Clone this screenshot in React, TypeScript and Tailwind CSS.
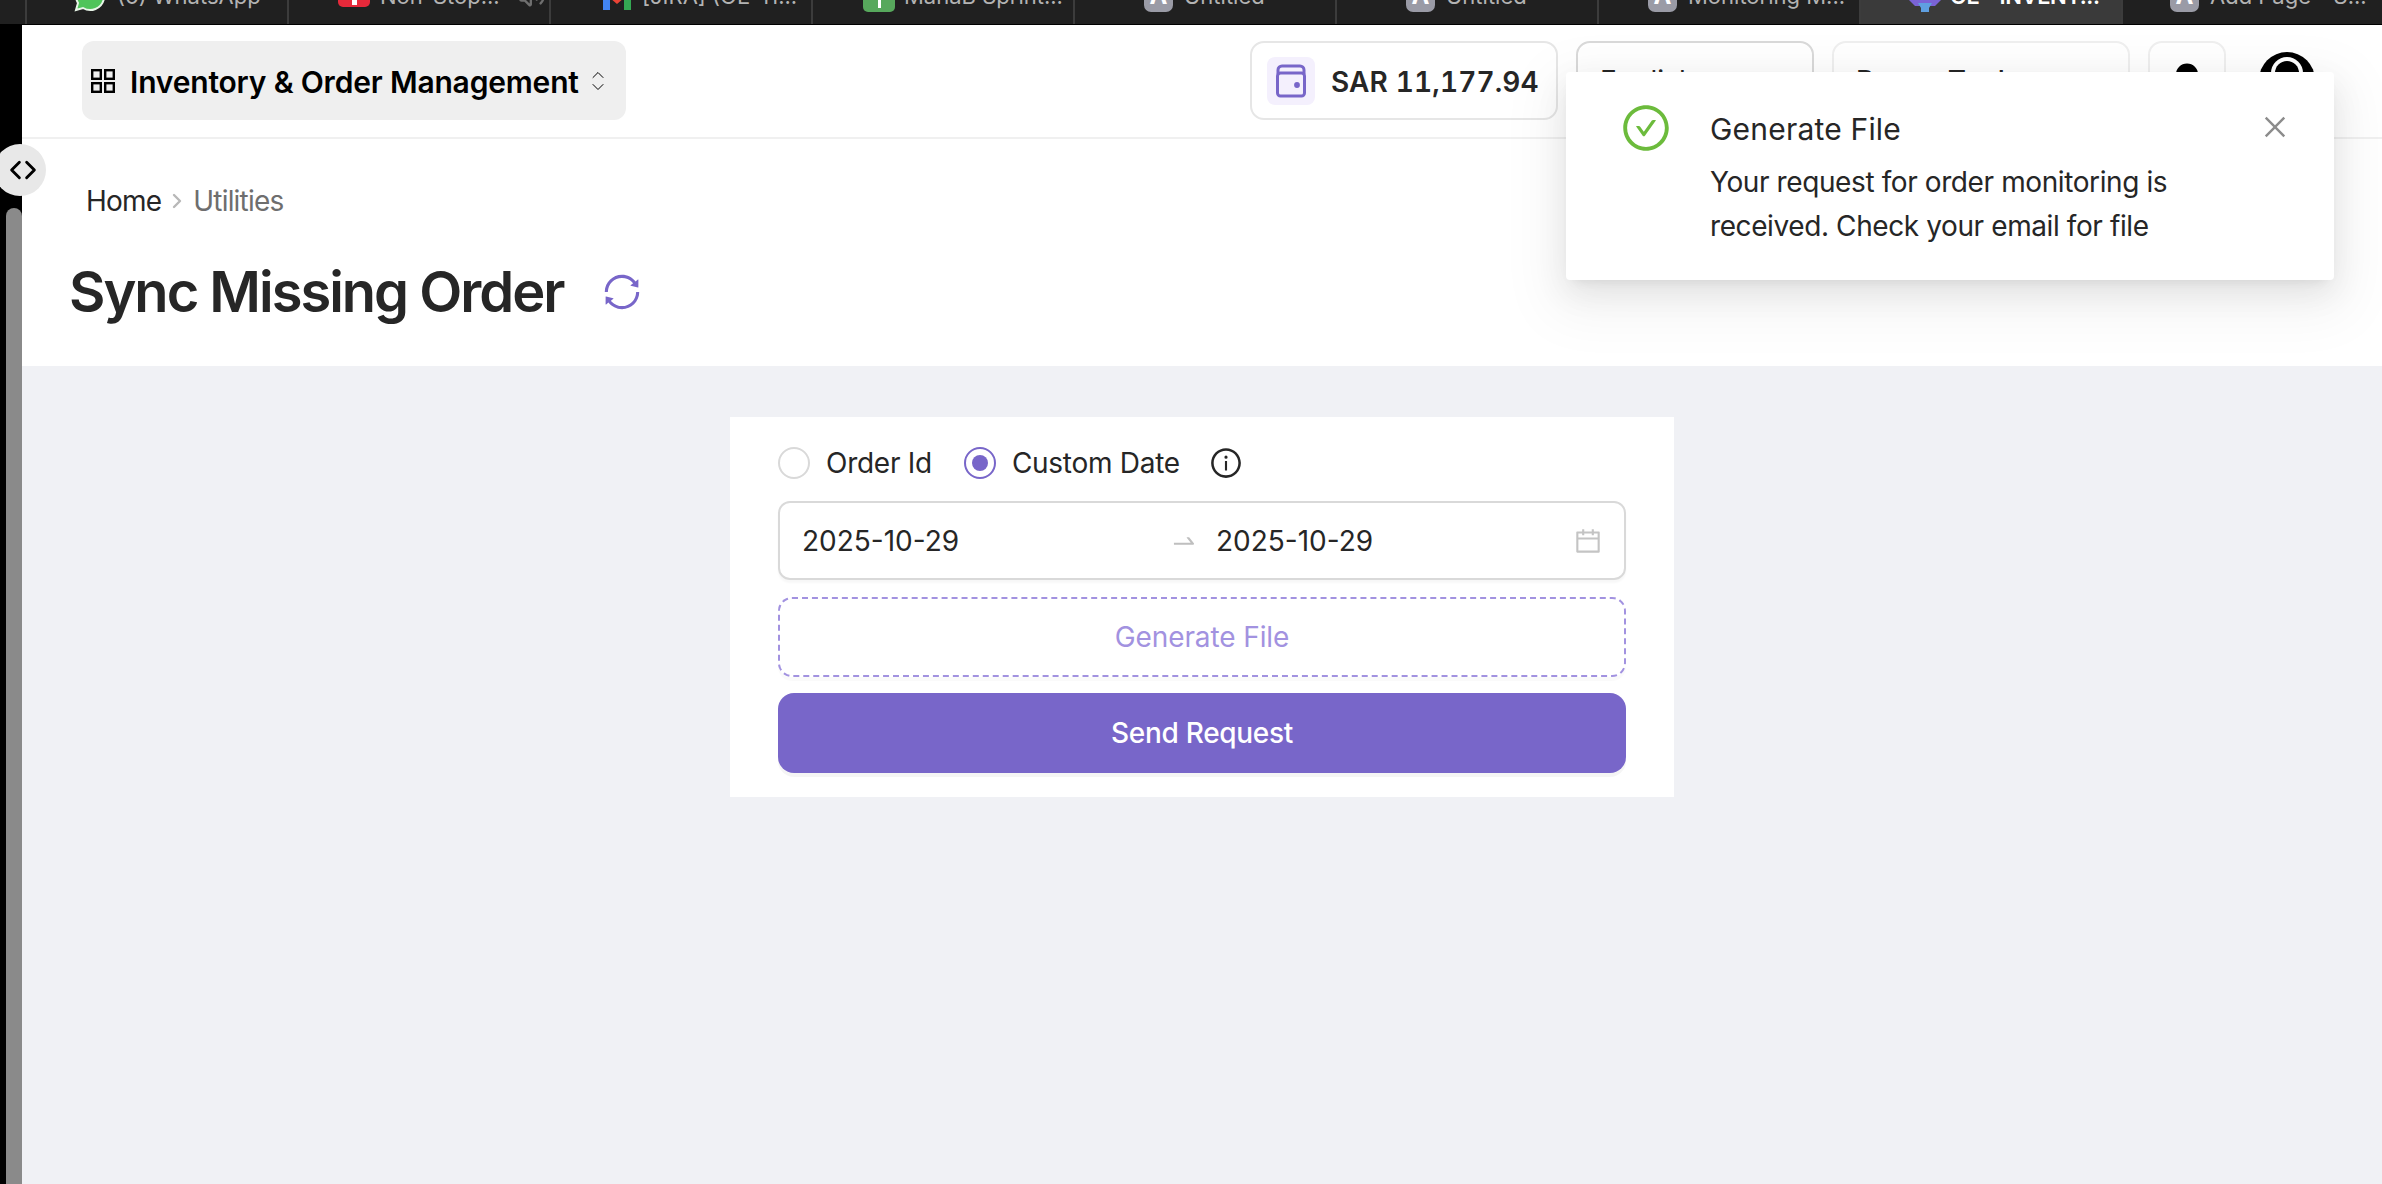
import { AiOutlineCalendar, AiOutlineCheckCircle, AiOutlineClose, AiOutlineInfoCircle, AiOutlineSwapRight, AiOutlineSync } from 'react-icons/ai';
import { Bell, ChevronDown, ChevronLeft, ChevronRight, ChevronUp, Volume2 } from 'lucide-react';

const LetterBadge = () => (
  <div className="flex h-[32px] w-[29px] shrink-0 items-center justify-center rounded-[7px] bg-[#9a9ba6] text-[24px] font-bold text-white">A</div>
);

const tabs = [
  {
    label: '(6) WhatsApp',
    cls: 'pl-[47px]',
    gap: 'gap-[11px]',
    icon: (
      <svg viewBox="0 0 32 32" className="h-[32px] w-[32px] shrink-0">
        <path d="M16 2a14 14 0 0 0-12 21L2 30l7-2a14 14 0 1 0 7-26z" fill="#4fc45a" stroke="#e8f5e8" strokeWidth="2" />
      </svg>
    ),
  },
  {
    label: 'Non-Stop...',
    cls: 'pl-[49px]',
    gap: 'gap-[10px]',
    muted: true,
    icon: <div className="flex h-[22px] w-[32px] shrink-0 items-end justify-center rounded-[5px] bg-[#e5293a] pb-[2px]"><div className="h-[7px] w-[5px] bg-white" /></div>,
  },
  {
    label: '[JIRA] (OE-11...',
    cls: 'pl-[52px]',
    gap: 'gap-[11px]',
    icon: (
      <svg viewBox="0 0 28 28" className="h-[28px] w-[28px] shrink-0">
        <rect x="0" y="0" width="7" height="28" fill="#4285f4" />
        <rect x="21" y="0" width="7" height="28" fill="#34a853" />
        <path d="M7 10l7 7 7-7v6l-7 6-7-6z" fill="#ea4335" />
      </svg>
    ),
  },
  {
    label: 'MahaB Sprint...',
    cls: 'pl-[50px]',
    gap: 'gap-[9px]',
    icon: <div className="flex h-[32px] w-[32px] shrink-0 justify-center rounded-[5px] bg-[#57a85c]"><div className="h-[28px] w-[3px] bg-white" /></div>,
  },
  { label: 'Untitled', cls: 'pl-[69px]', gap: 'gap-[11px]', icon: <LetterBadge /> },
  { label: 'Untitled', cls: 'pl-[69px]', gap: 'gap-[11px]', icon: <LetterBadge /> },
  { label: 'Monitoring M...', cls: 'pl-[49px]', gap: 'gap-[11px]', icon: <LetterBadge /> },
  {
    label: 'OE - INVENT...',
    cls: 'pl-[48px] tracking-[-0.4px]',
    gap: 'gap-[9px]',
    active: true,
    icon: (
      <svg viewBox="0 0 32 32" className="h-[32px] w-[32px] shrink-0">
        <path d="M0 20h32l-6 6h-20z" fill="#7a63d6" />
        <path d="M9 23h14l-3 5v4h-8v-4z" fill="#5f9fe0" />
      </svg>
    ),
  },
  { label: 'Add Page - S...', cls: 'pl-[47px]', gap: 'gap-[11px]', icon: <LetterBadge /> },
];

const BrowserTabs = () => (
  <div className="flex h-[24px] shrink-0 overflow-hidden bg-[#202020] pl-[25px] text-[22px] text-[#b3b3b3]">
    {tabs.map((tab, i) => (
      <div
        key={i}
        className={`flex h-[24px] w-[262px] shrink-0 items-center border-l-2 border-[#3c3c3c] ${tab.cls} ${tab.active ? 'bg-[#3a3a3a] font-semibold text-white' : ''}`}
      >
        <div className={`mb-[32px] flex h-[32px] items-center whitespace-nowrap ${tab.gap}`}>
          {tab.icon}
          <span>{tab.label}</span>
          {tab.muted && <Volume2 className="ml-[8px] h-[28px] w-[28px] text-[#6f6f6f]" />}
        </div>
      </div>
    ))}
  </div>
);

const HeaderBox = ({ className, children }: { className: string; children: React.ReactNode }) => (
  <div className={`flex h-[79px] items-center rounded-[14px] border-2 ${className}`}>{children}</div>
);

const Header = () => (
  <div className="flex h-[114px] shrink-0 items-start border-b-2 border-[#f0f0f0] bg-white pt-[16px] pl-[60px]">
    <div className="flex h-[79px] w-[544px] items-center rounded-[12px] bg-[#efefef] pl-[9px] text-black">
      <svg viewBox="0 0 24 24" className="h-[24px] w-[24px] shrink-0" fill="none" stroke="currentColor" strokeWidth="2.4">
        <rect x="1.2" y="1.2" width="8.6" height="8.6" />
        <rect x="14.2" y="1.2" width="8.6" height="8.6" />
        <rect x="1.2" y="14.2" width="8.6" height="8.6" />
        <rect x="14.2" y="14.2" width="8.6" height="8.6" />
      </svg>
      <span className="mt-[3px] ml-[15px] whitespace-nowrap text-[30px] font-semibold tracking-[-0.18px]">Inventory &amp; Order Management</span>
      <div className="ml-[9px] flex flex-col">
        <ChevronUp className="-my-[4px] h-[20px] w-[20px]" strokeWidth={1.2} />
        <ChevronDown className="-my-[4px] h-[20px] w-[20px]" strokeWidth={1.2} />
      </div>
    </div>
    <div className="ml-auto flex items-start gap-[18px] pr-[67px]">
      <HeaderBox className="w-[308px] border-[#e6e6e6] pl-[15px]">
        <div className="flex h-[48px] w-[48px] items-center justify-center rounded-[8px] bg-[#f4f0fd]">
          <svg viewBox="0 0 30 34" className="h-[34px] w-[30px]" fill="none" stroke="#7866c9" strokeWidth="3">
            <path d="M2 10V6a4 4 0 0 1 4-4h18a4 4 0 0 1 4 4v4" />
            <rect x="1.5" y="9" width="27" height="23" rx="3" />
            <circle cx="21" cy="21" r="1.4" fill="#7866c9" />
          </svg>
        </div>
        <span className="mt-[2px] ml-[16px] text-[28px] font-semibold tracking-[0.15px] text-[#262626] tabular-nums">SAR 11,177.94</span>
      </HeaderBox>
      <HeaderBox className="w-[238px] border-[#d9d9d9] pl-[22px] text-[28px] text-[#262626]">English</HeaderBox>
      <HeaderBox className="w-[298px] border-[#efefef] pl-[22px] text-[28px] font-medium text-[#262626]">Power Tools</HeaderBox>
      <HeaderBox className="w-[78px] justify-center border-[#efefef]">
        <Bell className="h-[38px] w-[38px] text-black" fill="currentColor" />
      </HeaderBox>
      <svg viewBox="0 0 56 56" className="mt-[11px] ml-[15px] h-[56px] w-[56px]">
        <circle cx="28" cy="28" r="28" fill="#000" />
        <circle cx="28" cy="21" r="16" fill="#fff" />
        <circle cx="28" cy="21" r="12" fill="#000" />
      </svg>
    </div>
  </div>
);

const Toast = () => (
  <div className="absolute top-[72px] left-[1566px] flex h-[208px] w-[768px] rounded-[4px] bg-white pt-[30px] pl-[54px] shadow-[0_12px_32px_rgba(0,0,0,0.08),0_6px_12px_-8px_rgba(0,0,0,0.12),0_18px_56px_16px_rgba(0,0,0,0.05)]">
    <AiOutlineCheckCircle className="h-[52px] w-[52px] shrink-0 text-[#6cbb3c]" />
    <div className="ml-[38px] w-[560px] text-[#262626]">
      <div className="mt-[5px] text-[30px] leading-[44px] tracking-[0.2px]">Generate File</div>
      <div className="mt-[9px] text-[28px] leading-[44px] tracking-[-0.4px]">Your request for order monitoring is received. Check your email for file</div>
    </div>
    <AiOutlineClose className="absolute top-[40px] right-[44px] h-[30px] w-[30px] text-[#8c8c8c]" />
  </div>
);

const Radio = ({ label, checked }: { label: string; checked?: boolean }) => (
  <div className="flex items-center">
    <div className={`flex h-[32px] w-[32px] items-center justify-center rounded-full border-2 ${checked ? 'border-[#7866c9]' : 'border-[#d9d9d9]'}`}>
      {checked && <div className="h-[16px] w-[16px] rounded-full bg-[#7866c9]" />}
    </div>
    <span className="ml-[16px] text-[28px] tracking-[-0.27px] text-[#262626]">{label}</span>
  </div>
);

const SyncForm = () => (
  <div className="mx-auto mt-[51px] flex h-[380px] w-[944px] flex-col bg-white px-[48px] pt-[30px]">
    <div className="flex h-[32px] items-center">
      <Radio label="Order Id" />
      <div className="w-[32px]" />
      <Radio label="Custom Date" checked />
      <AiOutlineInfoCircle className="ml-[29px] h-[34px] w-[34px] text-[#262626]" />
    </div>
    <div className="mt-[22px] flex h-[79px] items-center rounded-[12px] border-2 border-[#d9d9d9] pl-[22px] text-[28px] text-[#262626] shadow-[0_3px_2px_rgba(0,0,0,0.03)]">
      <span className="w-[368px]">2025-10-29</span>
      <AiOutlineSwapRight className="h-[28px] w-[28px] text-[#bfbfbf]" />
      <span className="ml-[18px]">2025-10-29</span>
      <AiOutlineCalendar className="mr-[21px] ml-auto h-[30px] w-[30px] text-[#c4c4c4]" />
    </div>
    <div className="mt-[17px] flex h-[80px] items-center justify-center rounded-[14px] border-2 border-dashed border-[#a292e0] text-[28px] tracking-[-0.1px] text-[#a292e0] shadow-[0_4px_0_rgba(0,0,0,0.02)]">
      Generate File
    </div>
    <div className="mt-[16px] flex h-[80px] items-center justify-center rounded-[16px] bg-[#7866c9] text-[28px] font-medium tracking-[-0.3px] text-white shadow-[0_4px_0_rgba(0,0,0,0.04)]">
      Send Request
    </div>
  </div>
);

export default function App() {
  return (
    <div className="relative flex h-[1184px] flex-col overflow-hidden bg-black font-['Inter',sans-serif]">
      <BrowserTabs />
      <div className="flex min-h-0 flex-1 pt-px">
        <div className="w-[22px] shrink-0 pt-[183px] pl-[6px]">
          <div className="h-full rounded-t-[8px] bg-[#8a8a8a]" />
        </div>
        <div className="flex min-w-0 flex-1 flex-col">
          <Header />
          <div className="h-[227px] shrink-0 bg-white pt-[44px]">
            <div className="flex items-center pl-[64px] text-[28px] leading-[36px] tracking-[-0.8px]">
              <span className="text-[#262626]">Home</span>
              <ChevronRight className="mx-[4px] h-[24px] w-[24px] text-[#b8b8b8]" strokeWidth={2.4} />
              <span className="text-[#6e6e6e]">Utilities</span>
            </div>
            <div className="mt-[41px] flex items-center pl-[47px]">
              <h1 className="text-[56px] leading-[64px] font-semibold tracking-[-2px] text-[#262626]">Sync Missing Order</h1>
              <AiOutlineSync className="ml-[37px] h-[42px] w-[42px] text-[#7866c9]" />
            </div>
          </div>
          <div className="flex-1 bg-[#f0f1f5]">
            <SyncForm />
          </div>
        </div>
      </div>
      <div className="absolute top-[144px] left-[-6px] flex h-[52px] w-[52px] items-center justify-center rounded-full bg-[#e8e8e8] pl-[6px] text-black">
        <ChevronLeft className="-mr-[8px] h-[32px] w-[32px]" strokeWidth={2.2} />
        <ChevronRight className="-ml-[8px] h-[32px] w-[32px]" strokeWidth={2.2} />
      </div>
      <Toast />
    </div>
  );
}
